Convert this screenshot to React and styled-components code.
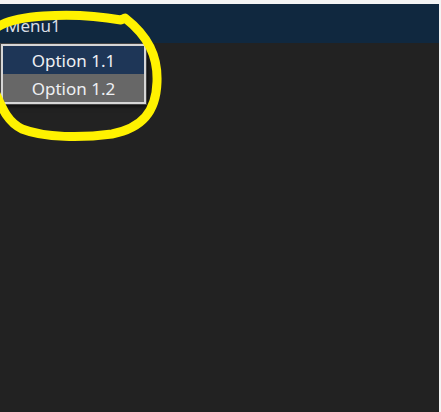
import React from 'react';
import styled, { createGlobalStyle } from 'styled-components';

const GlobalStyle = createGlobalStyle`
  html, body {
    margin: 0;
    padding: 0;
    background: #f4f4f4;
  }
  body {
    font-family: "Noto Sans", "Open Sans", sans-serif;
  }
`;

const options = ['Option 1.1', 'Option 1.2'];

const App = () => {
  return (
    <StyledFrame>
      <GlobalStyle />
      <StyledWindow>
        <StyledMenuBar>
          <StyledMenuTitle>Menu1</StyledMenuTitle>
        </StyledMenuBar>
        <StyledDropdown>
          {options.map((option, i) => (
            <StyledOption key={option} active={i === 0}>
              {option}
            </StyledOption>
          ))}
        </StyledDropdown>
        <StyledMark viewBox="0 0 441 408" aria-hidden="true">
          <path
            d="M -6 26 C 8 11, 70 7, 121 16 L 125 14 C 148 32, 158 52, 157 78 C 156 108, 142 124, 112 130 C 82 134, 45 134, 22 125 C 8 118, 3 106, -4 90"
            fill="none"
            stroke="#fff200"
            strokeWidth="9"
            strokeLinecap="round"
            strokeLinejoin="round"
          />
        </StyledMark>
      </StyledWindow>
    </StyledFrame>
  );
};

export default App;

const StyledFrame = styled.div`
  width: 441px;
  height: 412px;
  padding: 4px 2px 0 0;
  box-sizing: border-box;
`;

const StyledWindow = styled.div`
  position: relative;
  height: 100%;
  background: #222222;
  overflow: hidden;
`;

const StyledMenuBar = styled.div`
  height: 39px;
  background: #10283f;
  display: flex;
  align-items: flex-end;
  padding: 0 0 9px 5px;
  box-sizing: border-box;
`;

const StyledMenuTitle = styled.span`
  color: #d8dde4;
  font-size: 17px;
  line-height: 17px;
`;

const StyledDropdown = styled.div`
  position: absolute;
  left: 1px;
  top: 40px;
  width: 141px;
  border: 2px solid #d6d6d6;
  outline: 1px solid #444;
  box-shadow: 2px 3px 4px rgba(0, 0, 0, 0.6);
  display: flex;
  flex-direction: column;
`;

const StyledOption = styled.div`
  height: 28px;
  display: flex;
  align-items: center;
  justify-content: center;
  background: ${({ active }) => (active ? '#1e3657' : '#676767')};
  color: #eef0f3;
  font-size: 17px;
`;

const StyledMark = styled.svg`
  position: absolute;
  left: 0;
  top: 0;
  width: 441px;
  height: 408px;
  pointer-events: none;
`;
